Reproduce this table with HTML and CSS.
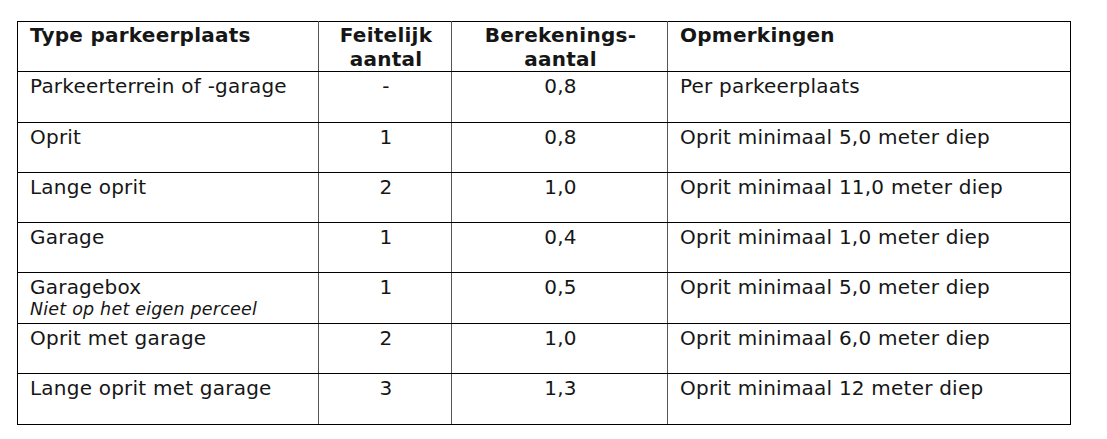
FILE: index.html
```html
<!DOCTYPE html>
<html lang="nl">
<head>
<meta charset="utf-8">
<title>Parkeerplaatsen</title>
<link rel="stylesheet" href="styles.css">
</head>
<body>
<table class="park">
  <colgroup>
    <col class="c1"><col class="c2"><col class="c3"><col class="c4">
  </colgroup>
  <thead>
    <tr class="h50">
      <th class="left">Type parkeerplaats</th>
      <th>Feitelijk<br>aantal</th>
      <th>Berekenings-<br>aantal</th>
      <th class="left">Opmerkingen</th>
    </tr>
  </thead>
  <tbody>
    <tr class="h51">
      <td>Parkeerterrein of -garage</td>
      <td class="mid">-</td>
      <td class="mid">0,8</td>
      <td>Per parkeerplaats</td>
    </tr>
    <tr class="h50">
      <td>Oprit</td>
      <td class="mid">1</td>
      <td class="mid">0,8</td>
      <td>Oprit minimaal 5,0 meter diep</td>
    </tr>
    <tr class="h50">
      <td>Lange oprit</td>
      <td class="mid">2</td>
      <td class="mid">1,0</td>
      <td>Oprit minimaal 11,0 meter diep</td>
    </tr>
    <tr class="h50">
      <td>Garage</td>
      <td class="mid">1</td>
      <td class="mid">0,4</td>
      <td>Oprit minimaal 1,0 meter diep</td>
    </tr>
    <tr class="h51">
      <td>Garagebox<span class="note">Niet op het eigen perceel</span></td>
      <td class="mid">1</td>
      <td class="mid">0,5</td>
      <td>Oprit minimaal 5,0 meter diep</td>
    </tr>
    <tr class="h50">
      <td>Oprit met garage</td>
      <td class="mid">2</td>
      <td class="mid">1,0</td>
      <td>Oprit minimaal 6,0 meter diep</td>
    </tr>
    <tr class="h51">
      <td>Lange oprit met garage</td>
      <td class="mid">3</td>
      <td class="mid">1,3</td>
      <td>Oprit minimaal 12 meter diep</td>
    </tr>
  </tbody>
</table>
</body>
</html>
```

FILE: styles.css
```css
html, body {
  margin: 0;
  padding: 0;
  background: #ffffff;
}

body {
  font-family: "DejaVu Sans", Verdana, sans-serif;
  color: #161616;
}

.park {
  border-collapse: collapse;
  table-layout: fixed;
  width: 1053px;
  margin: 21px 0 0 17px;
}

.c1 { width: 301px; }
.c2 { width: 133px; }
.c3 { width: 216px; }
.c4 { width: 403px; }

.park th,
.park td {
  border-top: 1px solid #000;
  border-bottom: 1px solid #000;
  border-left: 1px solid #555;
  border-right: 1px solid #555;
  vertical-align: top;
  padding: 2px 10px 0 12px;
  font-size: 20px;
  line-height: 24px;
  letter-spacing: 0.22px;
  text-align: left;
}

.park th {
  padding-top: 1px;
  font-weight: bold;
  text-align: center;
  letter-spacing: 0.25px;
}

.park th:first-child,
.park td:first-child {
  border-left-color: #000;
}

.park th:last-child,
.park td:last-child {
  border-right-color: #000;
}

.park th.left {
  text-align: left;
}

.park td.mid {
  text-align: center;
}

.h50 { height: 50px; }
.h51 { height: 51px; }

.note {
  display: block;
  font-style: italic;
  font-size: 17.5px;
  line-height: 20px;
  letter-spacing: 0.2px;
}
```
